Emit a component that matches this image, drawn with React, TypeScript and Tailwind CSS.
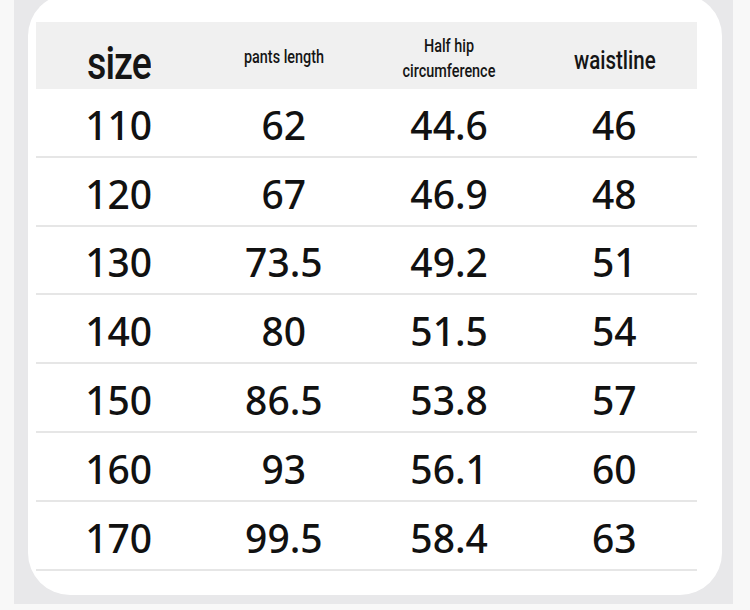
const rows = [
  ["110", "62", "44.6", "46"],
  ["120", "67", "46.9", "48"],
  ["130", "73.5", "49.2", "51"],
  ["140", "80", "51.5", "54"],
  ["150", "86.5", "53.8", "57"],
  ["160", "93", "56.1", "60"],
  ["170", "99.5", "58.4", "63"],
]

const condensed = { fontFamily: "Roboto, 'Liberation Sans', sans-serif" }

export default function App() {
  return (
    <div className="w-[750px] h-[610px] bg-[#f8f8f8] pl-[14px] pr-[17px] overflow-hidden">
      <div className="h-full bg-[#e8e8ea] pl-[14px] pr-[11px]">
        <div className="bg-white rounded-[42px] -mt-[6px] h-[601px] pt-[28px] pl-[8px] pr-[25px]">
          <div className="grid grid-cols-4 h-[67px] bg-[#f0f0f0] items-center text-center text-[#151515]" style={condensed}>
            <div className="flex justify-center pt-[14px]">
              <span className="text-[47px] font-medium leading-none scale-x-[0.8] tracking-tight">size</span>
            </div>
            <div className="flex justify-center pt-[2px]">
              <span className="text-[18px] font-medium leading-none scale-x-[0.8] whitespace-nowrap">pants length</span>
            </div>
            <div className="flex justify-center pt-[4px]">
              <span className="text-[18px] font-medium leading-[25px] scale-x-[0.8] whitespace-nowrap">
                Half hip<br />circumference
              </span>
            </div>
            <div className="flex justify-center pt-[10px]">
              <span className="text-[25px] font-medium leading-none scale-x-[0.82] whitespace-nowrap">waistline</span>
            </div>
          </div>
          {rows.map((r) => (
            <div
              key={r[0]}
              className="grid grid-cols-4 h-[68.8px] items-center text-center text-[#111] border-b-2 border-[#e6e6e6] text-[39px] font-medium"
              style={{ fontFamily: "'Noto Sans', 'Open Sans', sans-serif" }}
            >
              {r.map((v, i) => (
                <div key={i} className="leading-none pt-[4px]">{v}</div>
              ))}
            </div>
          ))}
        </div>
      </div>
    </div>
  )
}
